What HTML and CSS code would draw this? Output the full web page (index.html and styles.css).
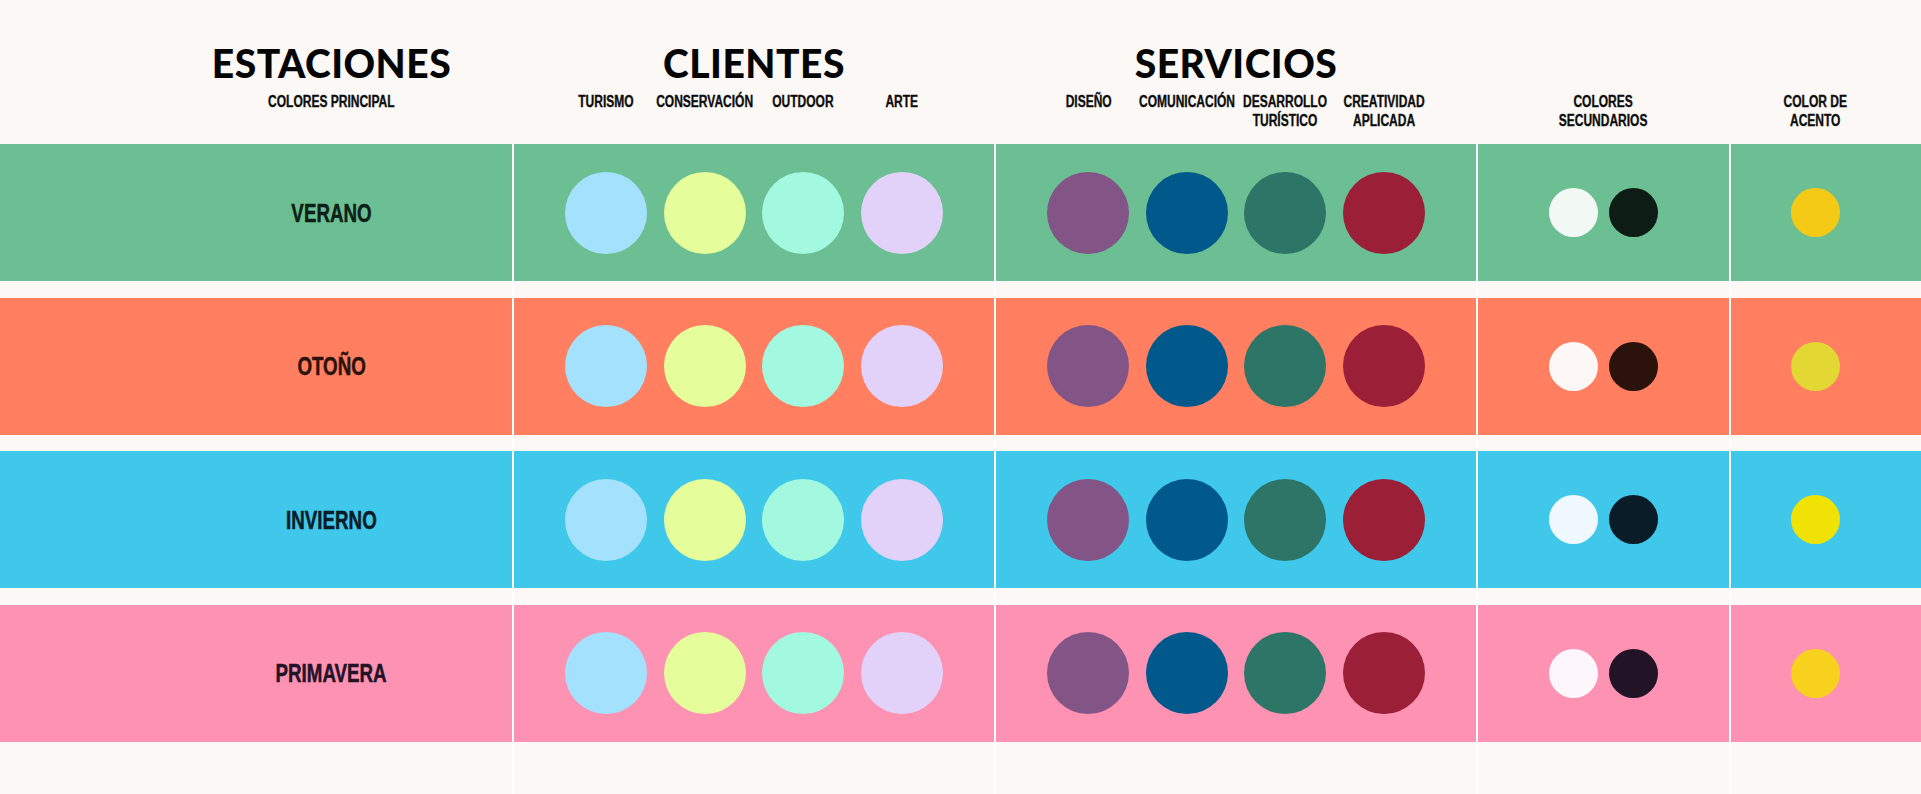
FILE: index.html
```html
<!DOCTYPE html>
<html lang="es">
<head>
<meta charset="utf-8">
<title>Paleta de colores</title>
<link rel="stylesheet" href="styles.css">
</head>
<body>
<main class="page">
  <header class="head">
    <div class="hcell first">
      <h1 class="title">ESTACIONES</h1>
      <div class="sub"><span class="cond">COLORES PRINCIPAL</span></div>
    </div>
    <div class="hcell">
      <h1 class="title">CLIENTES</h1>
      <div class="labels">
        <div class="lab"><span class="cond">TURISMO</span></div>
        <div class="lab"><span class="cond">CONSERVACIÓN</span></div>
        <div class="lab"><span class="cond">OUTDOOR</span></div>
        <div class="lab"><span class="cond">ARTE</span></div>
      </div>
    </div>
    <div class="hcell">
      <h1 class="title">SERVICIOS</h1>
      <div class="labels">
        <div class="lab"><span class="cond">DISEÑO</span></div>
        <div class="lab"><span class="cond">COMUNICACIÓN</span></div>
        <div class="lab"><span class="cond">DESARROLLO<br>TURÍSTICO</span></div>
        <div class="lab"><span class="cond">CREATIVIDAD<br>APLICADA</span></div>
      </div>
    </div>
    <div class="hcell">
      <div class="title"></div>
      <div class="sub"><span class="cond">COLORES<br>SECUNDARIOS</span></div>
    </div>
    <div class="hcell last">
      <div class="title"></div>
      <div class="sub"><span class="cond">COLOR DE<br>ACENTO</span></div>
    </div>
  </header>

  <section class="rows">
    <div class="row verano">
      <div class="cell first"><span class="name cond">VERANO</span></div>
      <div class="cell big"><span class="dot tur"></span><span class="dot con"></span><span class="dot out"></span><span class="dot arte"></span></div>
      <div class="cell big"><span class="dot dis"></span><span class="dot com"></span><span class="dot des"></span><span class="dot cre"></span></div>
      <div class="cell small"><span class="dot light"></span><span class="dot dark"></span></div>
      <div class="cell small last"><span class="dot accent"></span></div>
    </div>
    <div class="row otono">
      <div class="cell first"><span class="name cond">OTOÑO</span></div>
      <div class="cell big"><span class="dot tur"></span><span class="dot con"></span><span class="dot out"></span><span class="dot arte"></span></div>
      <div class="cell big"><span class="dot dis"></span><span class="dot com"></span><span class="dot des"></span><span class="dot cre"></span></div>
      <div class="cell small"><span class="dot light"></span><span class="dot dark"></span></div>
      <div class="cell small last"><span class="dot accent"></span></div>
    </div>
    <div class="row invierno">
      <div class="cell first"><span class="name cond">INVIERNO</span></div>
      <div class="cell big"><span class="dot tur"></span><span class="dot con"></span><span class="dot out"></span><span class="dot arte"></span></div>
      <div class="cell big"><span class="dot dis"></span><span class="dot com"></span><span class="dot des"></span><span class="dot cre"></span></div>
      <div class="cell small"><span class="dot light"></span><span class="dot dark"></span></div>
      <div class="cell small last"><span class="dot accent"></span></div>
    </div>
    <div class="row primavera">
      <div class="cell first"><span class="name cond">PRIMAVERA</span></div>
      <div class="cell big"><span class="dot tur"></span><span class="dot con"></span><span class="dot out"></span><span class="dot arte"></span></div>
      <div class="cell big"><span class="dot dis"></span><span class="dot com"></span><span class="dot des"></span><span class="dot cre"></span></div>
      <div class="cell small"><span class="dot light"></span><span class="dot dark"></span></div>
      <div class="cell small last"><span class="dot accent"></span></div>
    </div>
  </section>
</main>
</body>
</html>
```

FILE: styles.css
```css
* { box-sizing: border-box; }

html, body {
  margin: 0;
  padding: 0;
  background: #fbf8f6;
}

body {
  font-family: "Liberation Sans", Arial, sans-serif;
  color: #0b0b0b;
  overflow: hidden;
}

.page {
  width: 100%;
  height: 794px;
  display: flex;
  flex-direction: column;
}

/* condensed look: Helvetica Condensed Bold approximation */
.cond {
  display: inline-block;
  font-weight: 700;
  transform: scaleX(0.75);
  transform-origin: 50% 50%;
  white-space: nowrap;
  -webkit-text-stroke: 0.35px currentColor;
}

/* shared column template */
.head,
.row {
  display: grid;
  grid-template-columns: 512px 480px 480px 251px 1fr;
  column-gap: 2px;
}

/* ---------- header ---------- */
.head {
  height: 144px;
  padding-top: 43px;
}

.hcell {
  display: flex;
  flex-direction: column;
  align-items: center;
}

.hcell.first { padding-left: 151px; }
.hcell.last { padding-right: 22px; }

.title {
  margin: 0;
  height: 40px;
  font-family: "Lato", "Liberation Sans", sans-serif;
  font-weight: 900;
  font-size: 39px;
  line-height: 40px;
  letter-spacing: 0.5px;
  color: #050505;
  white-space: nowrap;
}

.sub,
.lab {
  margin-top: 9px;
  font-size: 16px;
  line-height: 19px;
  text-align: center;
  white-space: nowrap;
  color: #0d0d0d;
}

.labels {
  display: flex;
  justify-content: center;
  gap: 16.5px;
}

.lab {
  width: 82px;
  display: flex;
  justify-content: center;
}

/* ---------- rows ---------- */
.rows {
  flex: 1;
  display: flex;
  flex-direction: column;
  gap: 16.5px;
  background-image:
    linear-gradient(#ffffff, #ffffff),
    linear-gradient(#ffffff, #ffffff),
    linear-gradient(#ffffff, #ffffff),
    linear-gradient(#ffffff, #ffffff);
  background-size: 2px 100%;
  background-repeat: no-repeat;
  background-position: 512px 0, 994px 0, 1476px 0, 1729px 0;
}

.row {
  height: 137px;
}

.cell {
  display: flex;
  align-items: center;
  justify-content: center;
}

.cell.first { padding-left: 151px; }
.cell.last { padding-right: 22px; }

.cell.big { gap: 16.5px; }
.cell.small { gap: 11px; }

.name {
  font-size: 25px;
  line-height: 30px;
  -webkit-text-stroke: 0.5px currentColor;
}

.dot {
  display: block;
  border-radius: 50%;
  flex: none;
}

.big .dot { width: 82px; height: 82px; }
.small .dot { width: 49px; height: 49px; }

.tur { background: #a3e1fd; }
.con { background: #e5fd9b; }
.out { background: #a3f9e0; }
.arte { background: #e2d2fa; }
.dis { background: #835586; }
.com { background: #01588b; }
.des { background: #2d7566; }
.cre { background: #9b1f37; }

/* season palettes */
.verano .cell { background: #6bbf92; }
.verano .name { color: #0e1f17; }
.verano .light { background: #f2f9f4; }
.verano .dark { background: #0d1d16; }
.verano .accent { background: #f5ca16; }

.otono .cell { background: #ff7f60; }
.otono .name { color: #2b120a; }
.otono .light { background: #fdf8f6; }
.otono .dark { background: #2b120a; }
.otono .accent { background: #e2d733; }

.invierno .cell { background: #3fc8ea; }
.invierno .name { color: #0a1c28; }
.invierno .light { background: #eff8fe; }
.invierno .dark { background: #0a1c28; }
.invierno .accent { background: #f1e206; }

.primavera .cell { background: #fd92b3; }
.primavera .name { color: #221326; }
.primavera .light { background: #fdf7fc; }
.primavera .dark { background: #221326; }
.primavera .accent { background: #f8d11f; }
```
